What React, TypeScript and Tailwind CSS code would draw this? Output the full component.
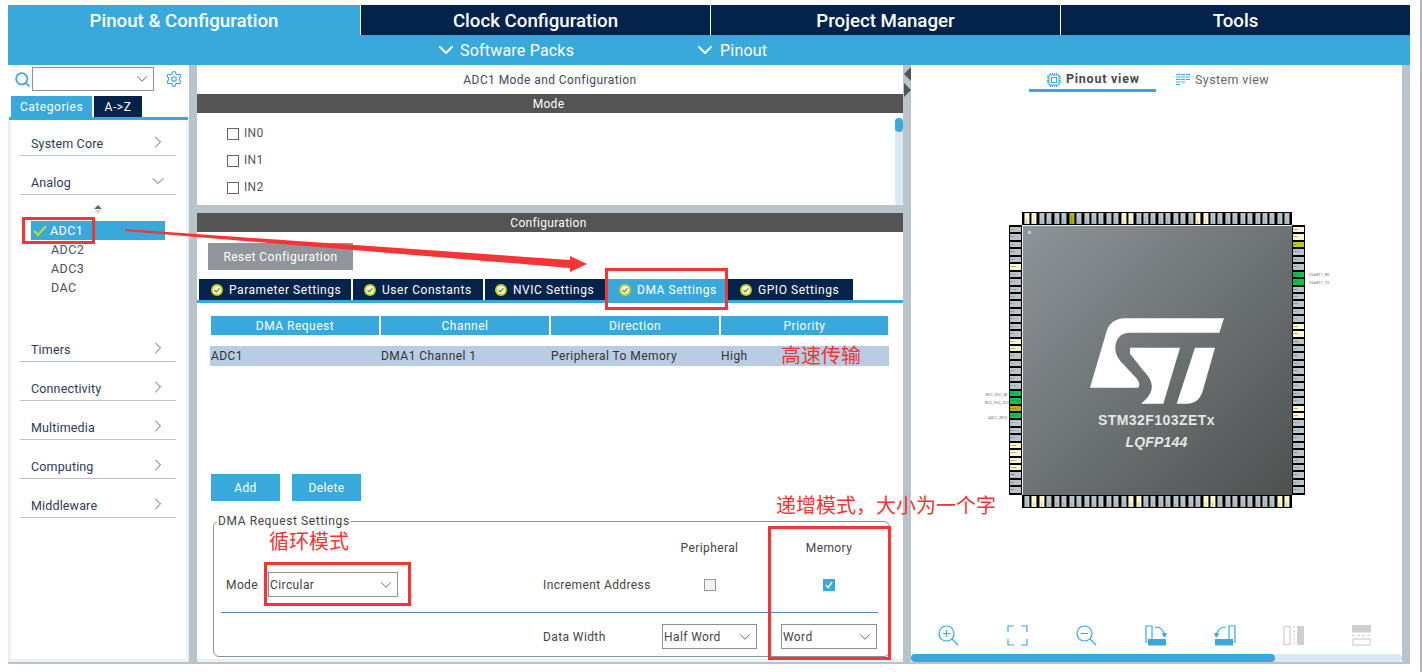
import React from "react";
import { ChevronDown, ChevronRight, Search, Settings } from "lucide-react";

const TOP = ["VDD","VSS","PE1","PE0","PB9","PB8","BOOT0","PB7","PB6","PB5","PB4","PB3","PG15","VDD","VSS","PG14","PG13","PG12","PG11","PG10","PG9","PD7","PD6","VDD","VSS","PD5","PD4","PD3","PD2","PD1","PD0","PC12","PC11","PC10","PA15","PA14"];
const RIGHT = ["VDD","VSS","NC","PA13","PA12","PA11","PA10","PA9","PA8","PC9","PC8","PC7","PC6","VDD","VSS","PG8","PG7","PG6","PG5","PG4","PG3","PG2","PD15","PD14","VDD","VSS","PD13","PD12","PD11","PD10","PD9","PD8","PB15","PB14","PB13","PB12"];
const LEFT = ["PE2","PE3","PE4","PE5","PE6","VBAT","PC13","PC14","PC15","PF0","PF1","PF2","PF3","PF4","PF5","VSS","VDD","PF6","PF7","PF8","PF9","PF10","OSC_IN","OSC_OUT","NRST","PC0","PC1","PC2","PC3","VSSA","VREF-","VREF+","VDDA","PA0","PA1","PA2"];
const BOTTOM = ["PA3","VSS","VDD","PA4","PA5","PA6","PA7","PC4","PC5","PB0","PB1","PB2","PF11","PF12","VSS","VDD","PF13","PF14","PF15","PG0","PG1","PE7","PE8","PE9","VSS","VDD","PE10","PE11","PE12","PE13","PE14","PE15","PB10","PB11","VSS","VDD"];

function pinColor(n: string): string {
  if (n.startsWith("VDD") || n.startsWith("VSS") || n === "VBAT" || n.startsWith("VREF")) return "bg-[#fff6cc]";
  if (n === "BOOT0") return "bg-[#b3b300]";
  if (n === "NRST") return "bg-[#b3b300]";
  if (n === "NC") return "bg-[#b9cc00]";
  if (n === "PA10" || n === "PA9" || n === "OSC_IN" || n === "OSC_OUT" || n === "PC0") return "bg-[#0cc44a]";
  return "bg-[#b9c4ca]";
}

function HPins({ names }: { names: string[] }) {
  return (
    <div className="flex flex-col bg-black py-px w-[13px] h-[270px]">
      {names.map((n, i) => (
        <div key={i} className={`flex-1 my-px mx-px overflow-hidden leading-[5px] text-[2.5px] text-[#555] ${pinColor(n)}`}>{n}</div>
      ))}
    </div>
  );
}
function VPins({ names }: { names: string[] }) {
  return (
    <div className="flex bg-black px-px h-[13px] ml-[13px] w-[270px]">
      {names.map((n, i) => (
        <div key={i} className={`flex-1 mx-px my-px overflow-hidden leading-[5px] text-[2.5px] text-[#555] [writing-mode:vertical-rl] rotate-180 ${pinColor(n)}`}>{n}</div>
      ))}
    </div>
  );
}

function Ok() {
  return (
    <svg width="12" height="12" viewBox="0 0 12 12" className="shrink-0">
      <circle cx="6" cy="6" r="5" fill="#f6f7d8" stroke="#c4cf1c" strokeWidth="2" />
      <path d="M3.6 6 L5.4 7.8 L8.4 4.4" fill="none" stroke="#6f7f2a" strokeWidth="1.2" />
    </svg>
  );
}

function Category({ label, open, h = "h-[39px]" }: { label: string; open?: boolean; h?: string }) {
  return (
    <div className={`ml-[9px] mr-[10px] ${h} border-b border-[#b9c4ca] flex items-end justify-between pb-[4px] pl-[11px] pr-[8px] text-[12.5px] text-[#2f3a55] tracking-[0.15px]`}>
      <span className="leading-[15px]">{label}</span>
      {open ? (
        <ChevronDown size={20} strokeWidth={1.1} className="text-[#555] -mb-[1px]" />
      ) : (
        <ChevronRight size={20} strokeWidth={1.1} className="text-[#555] -mb-[1px]" />
      )}
    </div>
  );
}

function Select({ value, w }: { value: string; w: string }) {
  return (
    <div className={`${w} h-[25px] border border-[#8c9196] flex items-center justify-between pl-px pr-[2px] text-[12px] tracking-[0.4px] text-[#444]`}>
      <span>{value}</span>
      <ChevronDown size={18} strokeWidth={1.2} className="text-[#555]" />
    </div>
  );
}

function SubTab({ label, active, w }: { label: string; active?: boolean; w: string }) {
  return (
    <div className={`${w} h-[21px] flex items-center gap-[6px] text-[12px] tracking-[0.55px] text-white ${active ? "bg-[#39a9dc]" : "bg-[#03234b]"}`}>
      <Ok />
      <span>{label}</span>
    </div>
  );
}

const blue = "#39a9dc";

function ToolIcons() {
  return (
    <div className="h-[21px] pl-[27px] grid grid-cols-[69px_69px_69px_69px_69px_69px_69px]">
      <svg width="21" height="21" viewBox="0 0 21 21" fill="none" stroke={blue} strokeWidth="1.2">
        <circle cx="8.5" cy="8.5" r="7.5" /><path d="M14 14 L20 20 M5 8.5 H12 M8.5 5 V12" />
      </svg>
      <svg width="21" height="21" viewBox="0 0 21 21" fill="none" stroke={blue} strokeWidth="1.2">
        <path d="M1 7 V1 H7 M14 1 H20 V7 M20 14 V20 H14 M7 20 H1 V14" />
      </svg>
      <svg width="21" height="21" viewBox="0 0 21 21" fill="none" stroke={blue} strokeWidth="1.2">
        <circle cx="8.5" cy="8.5" r="7.5" /><path d="M14 14 L20 20 M5 8.5 H12" />
      </svg>
      <svg width="22" height="21" viewBox="0 0 22 21" fill="none" stroke={blue} strokeWidth="1.2">
        <path d="M7 17 H1 V1 H7 V14" />
        <rect x="3" y="14" width="18" height="6.5" fill={blue} stroke="none" />
        <path d="M10 2 C15 2 19 5 20 11" />
        <path d="M16.5 8.5 L20 13 L22 8 Z" fill={blue} stroke="none" />
      </svg>
      <svg width="22" height="21" viewBox="0 0 22 21" fill="none" stroke={blue} strokeWidth="1.2">
        <path d="M15 17 H21 V1 H15 V14" />
        <rect x="1" y="14" width="18" height="6.5" fill={blue} stroke="none" />
        <path d="M12 2 C7 2 3 5 2 11" />
        <path d="M0 8 L2 13 L5.5 8.5 Z" fill={blue} stroke="none" />
      </svg>
      <svg width="22" height="21" viewBox="0 0 22 21" fill="none" stroke="#cfcfcf" strokeWidth="1.2">
        <rect x="1" y="1.5" width="6" height="18" />
        <path d="M11 1 V20" strokeDasharray="2 2" />
        <rect x="14" y="1" width="7" height="19" fill="#cfcfcf" stroke="none" />
      </svg>
      <svg width="19" height="21" viewBox="0 0 19 21" fill="none" stroke="#cfcfcf" strokeWidth="1.2">
        <rect x="0" y="0" width="19" height="7.5" fill="#cfcfcf" stroke="none" />
        <path d="M0 10.5 H19" strokeDasharray="3 2" />
        <rect x="1" y="14" width="17" height="6" />
      </svg>
    </div>
  );
}

export default function App() {
  return (
    <div className="relative w-[1422px] h-[672px] bg-white border-r-2 border-[#b4b4b4] overflow-hidden pt-[5px] pl-[8px] font-['Roboto','Liberation_Sans',sans-serif]">
      <div className="w-[1402px]">
        {/* Top tabs */}
        <div className="flex h-[30px] text-[18.7px] font-medium text-white">
          <div className="w-[352px] pt-[2px] bg-[#39a9dc] flex items-center justify-center">Pinout &amp; Configuration</div>
          {["Clock Configuration", "Project Manager", "Tools"].map((t) => (
            <div key={t} className="w-[350px] pt-[2px] ml-px flex-1 bg-[#03234b] flex items-center justify-center">{t}</div>
          ))}
        </div>
        {/* Sub bar */}
        <div className="h-[30px] bg-[#39a9dc] flex items-center pl-[426px] text-[16px] text-white tracking-[0.2px]">
          <ChevronDown size={24} strokeWidth={2} />
          <span className="ml-[2px] w-[233px] pt-[1px]">Software Packs</span>
          <ChevronDown size={24} strokeWidth={2} />
          <span className="ml-[3px] pt-[1px]">Pinout</span>
        </div>

        {/* Body */}
        <div className="flex h-[599px] bg-[#b9c4ca] pb-[2px] pr-[8px]">
          {/* Sidebar */}
          <div className="w-[181px] flex flex-col bg-white">
            <div className="h-[31px] flex items-center pl-[6px] pb-[3px]">
              <Search size={17} strokeWidth={2.4} className="text-[#39a9dc]" />
              <div className="ml-[1px] w-[122px] h-[24px] border border-[#8c9196] flex items-center justify-end pr-[2px]">
                <ChevronDown size={18} strokeWidth={1.2} className="text-[#555]" />
              </div>
              <Settings size={18} strokeWidth={1.6} className="text-[#39a9dc] ml-[11px]" />
            </div>
            <div className="flex h-[21px] pl-[3px] gap-[2px] text-[12px] tracking-[0.55px] text-white">
              <div className="w-[81px] bg-[#39a9dc] flex items-center justify-center">Categories</div>
              <div className="w-[48px] bg-[#03234b] flex items-center justify-center">A-&gt;Z</div>
            </div>
            <div className="h-[3px] bg-[#39a9dc] mx-px" />
            <div className="flex-1 border-x-[3px] border-b-[3px] border-[#edf0f2] flex flex-col">
              <Category label="System Core" h="h-[36px]" />
              <Category label="Analog" open />
              <div className="h-[128px] relative text-[12.5px] tracking-[0.45px] text-[#4a4f63]">
                <div className="absolute left-[83px] top-[10px] flex flex-col items-center gap-[1px]">
                  <div className="w-0 h-0 border-x-[4px] border-x-transparent border-b-[4px] border-b-[#666]" />
                  <div className="w-0 h-0 border-x-[4px] border-x-transparent border-t-[4px] border-t-[#d5d5d5]" />
                </div>
                <div className="pt-[26px] pl-[20px]">
                  <div className="w-[134px] h-[19px] bg-[#39a9dc] text-white flex items-center pl-[2px] gap-[3px]">
                    <svg width="14" height="12" viewBox="0 0 14 12" fill="none" stroke="#c4d62a" strokeWidth="2.2" className="shrink-0"><path d="M1 6 L5 10 L13 1" /></svg>
                    <span className="leading-[19px]">ADC1</span>
                  </div>
                  {["ADC2", "ADC3", "DAC"].map((t) => (
                    <div key={t} className="h-[19px] pl-[20px] leading-[19px]">{t}</div>
                  ))}
                </div>
              </div>
              {["Timers", "Connectivity", "Multimedia", "Computing", "Middleware"].map((t) => (
                <Category key={t} label={t} />
              ))}
            </div>
          </div>

          <div className="w-[8px]" />

          {/* Center */}
          <div className="w-[706px] flex flex-col">
            <div className="bg-white">
              <div className="h-[29px] flex items-center justify-center text-[12px] tracking-[0.42px] text-[#454a5e]">ADC1 Mode and Configuration</div>
              <div className="h-[19px] pr-[3px] bg-[#535453] text-white text-[12px] tracking-[0.3px] flex items-center justify-center">Mode</div>
              <div className="h-[92px] flex">
                <div className="flex-1 pl-[30px] pt-[11px] text-[12px] tracking-[0.3px] text-[#555]">
                  {["IN0", "IN1", "IN2"].map((t) => (
                    <div key={t} className="h-[27px] flex items-start gap-[5px] leading-[19px]">
                      <div className="w-[12px] h-[12px] border border-[#666] mt-[4px]" />
                      <span>{t}</span>
                    </div>
                  ))}
                </div>
                <div className="w-[8px] mt-[5px] bg-[#d9e8f5] rounded-[4px]">
                  <div className="h-[14px] bg-[#39a9dc] rounded-[4px]" />
                </div>
              </div>
            </div>
            <div className="h-[8px]" />
            <div className="flex-1 bg-white flex flex-col border-b-[3px] border-[#edf0f2]">
              <div className="h-[19px] pr-[3px] bg-[#535453] text-white text-[12px] tracking-[0.3px] flex items-center justify-center">Configuration</div>
              <div className="mt-[11px] ml-[11px] w-[145px] h-[27px] bg-[#8f959a] text-white text-[12px] tracking-[0.45px] flex items-center justify-center">Reset Configuration</div>
              <div className="mt-[9px] ml-[2px] flex gap-[2px]">
                <SubTab label="Parameter Settings" w="w-[152px] pl-[12px]" />
                <SubTab label="User Constants" w="w-[130px] pl-[11px]" />
                <SubTab label="NVIC Settings" w="w-[120px] -mr-[2px] pl-[10px]" />
                <SubTab label="DMA Settings" active w="w-[123px] -mr-[2px] pl-[14px]" />
                <SubTab label="GPIO Settings" w="w-[125px] pl-[12px]" />
              </div>
              <div className="h-[3px] bg-[#39a9dc]" />
              <div className="mt-[13px] ml-[14px] w-[677px] grid grid-cols-[168px_168px_168px_167px] gap-x-[2px] h-[19px] text-white text-[12px] tracking-[0.5px]">
                {["DMA Request", "Channel", "Direction", "Priority"].map((t) => (
                  <div key={t} className="bg-[#39a9dc] flex items-center justify-center">{t}</div>
                ))}
              </div>
              <div className="mt-[11px] ml-[13px] w-[679px] h-[20px] bg-[#b8cce4] grid grid-cols-[170px_170px_170px_119px] text-[12px] text-[#333] items-center pl-px tracking-[0.45px]">
                {["ADC1", "DMA1 Channel 1", "Peripheral To Memory", "High"].map((t) => (
                  <div key={t}>{t}</div>
                ))}
              </div>
              <div className="mt-[108px] ml-[14px] flex gap-[12px] text-white text-[12px] tracking-[0.4px]">
                <div className="w-[69px] h-[27px] bg-[#39a9dc] flex items-center justify-center">Add</div>
                <div className="w-[69px] h-[27px] bg-[#39a9dc] flex items-center justify-center">Delete</div>
              </div>
              <div className="relative mt-[20px] ml-[16px] w-[677px] h-[136px] border border-[#8c9196] rounded-[6px] text-[12px] tracking-[0.4px] text-[#444]">
                <div className="absolute -top-[8px] left-[3px] bg-white px-px leading-[15px] tracking-[0.6px]">DMA Request Settings</div>
                <div className="absolute left-[556px] top-[18px] bottom-0 border-l border-[#5b7fbf]" />
                <div className="mt-[17px] h-[18px] flex items-center pl-[448px] leading-[18px]">
                  <div className="w-[95px] text-center">Peripheral</div>
                  <div className="w-[96px] ml-[24px] text-center">Memory</div>
                </div>
                <div className="mt-[15px] h-[25px] flex items-center pl-[12px]">
                  <span className="w-[42px]">Mode</span>
                  <Select value="Circular" w="w-[130px]" />
                  <span className="ml-[145px] w-[119px]">Increment Address</span>
                  <div className="w-[95px] flex justify-center">
                    <div className="w-[12px] h-[12px] border border-[#9a9a9a] bg-[#f2f2f2]" />
                  </div>
                  <div className="w-[96px] ml-[24px] flex justify-center">
                    <div className="w-[12px] h-[12px] bg-[#39a9dc] flex items-center justify-center">
                      <svg width="10" height="10" viewBox="0 0 10 10" fill="none" stroke="white" strokeWidth="1.4"><path d="M2 5 L4.2 7.6 L8 2" /></svg>
                    </div>
                  </div>
                </div>
                <div className="mt-[15px] mx-[7px] border-t border-[#5b7fbf] w-[657px]" />
                <div className="mt-[11px] h-[25px] flex items-center pl-[329px]">
                  <span className="w-[119px]">Data Width</span>
                  <Select value="Half Word" w="w-[95px]" />
                  <div className="w-[24px]" />
                  <Select value="Word" w="w-[96px]" />
                </div>
              </div>
            </div>
          </div>

          {/* Splitter arrows */}
          <div className="w-[8px] flex flex-col items-center pt-[2px] gap-[2px]">
            <div className="w-0 h-0 border-y-[7px] border-y-transparent border-r-[7px] border-r-[#535453]" />
            <div className="w-0 h-0 border-y-[7px] border-y-transparent border-l-[7px] border-l-[#535453]" />
          </div>

          {/* Right */}
          <div className="w-[491px] bg-white flex flex-col">
            <div className="h-[27px] flex pl-[118px] text-[12.5px]">
              <div className="w-[127px] border-b-[3px] border-[#39a9dc] flex items-center pl-[18px] pt-[5px] gap-[5px] font-bold text-[#4a4a4a] tracking-[0.75px]">
                <svg width="14" height="14" viewBox="0 0 14 14" fill="none" stroke={blue} strokeWidth="1" className="shrink-0">
                  <rect x="2" y="2" width="10" height="10" />
                  <rect x="4.5" y="4.5" width="5" height="5" />
                  <path d="M0 3.5H2M0 5.5H2M0 7.5H2M0 9.5H2M12 3.5H14M12 5.5H14M12 7.5H14M12 9.5H14M3.5 0V2M5.5 0V2M7.5 0V2M9.5 0V2M3.5 12V14M5.5 12V14M7.5 12V14M9.5 12V14" />
                </svg>
                <span>Pinout view</span>
              </div>
              <div className="flex items-center pl-[20px] gap-[5px] pt-[3px] text-[#666] tracking-[0.4px]">
                <svg width="14" height="14" viewBox="0 0 14 14" fill="none" stroke={blue} strokeWidth="1.2" className="shrink-0">
                  <path d="M0 1.5H4M5 1.5H9M10 1.5H14M0 4H4M5 4H9M10 4H14M0 6.5H4M5 6.5H9M10 6.5H14M0 9H4M5 9H9M0 11.5H4" />
                </svg>
                <span>System view</span>
              </div>
            </div>

            {/* Chip */}
            <div className="relative w-[296px] ml-[98px] mt-[120px]">
              <VPins names={TOP} />
              <div className="flex">
                <HPins names={LEFT} />
                <div className="relative w-[270px] h-[270px] border-l border-t border-[#eee] bg-gradient-to-br from-[#8e959a] to-[#4e5150] flex flex-col items-center text-[#e6e6e6]">
                  <div className="absolute left-[5px] top-[5px] w-[3px] h-[3px] bg-[#c4c8cc]" />
                  <svg width="155" height="100" viewBox="0 0 465 300" className="mt-[85px] -ml-[1px] shrink-0">
                    <path fill="#fff" d="M30 230 L80 60 C88 36 108 22 135 22 L432 22 L418 65 L150 65 C120 65 106 85 106 112 C106 135 120 150 135 165 L165 197 C178 210 182 222 174 230 Z" />
                    <path fill="#fff" d="M150 110 L300 110 L250 278 L183 278 C205 262 218 240 215 222 C212 200 200 190 188 176 L150 128 Z" />
                    <path fill="#fff" d="M345 110 L405 110 L368 240 C360 265 345 278 322 278 L290 278 Z" />
                  </svg>
                  <div className="-ml-[2px] font-['Liberation_Sans',sans-serif] font-bold text-[14px] tracking-[0.45px] leading-[18px]">STM32F103ZETx</div>
                  <div className="mt-[4px] -ml-[2px] font-['Liberation_Sans',sans-serif] font-bold italic text-[14px] tracking-[0.2px] leading-[18px]">LQFP144</div>
                </div>
                <HPins names={RIGHT} />
              </div>
              <VPins names={BOTTOM} />
              <div className="absolute left-[300px] top-[59px] text-[3.5px] text-[#666] leading-[8px] tracking-[0.2px]">USART1_RX<br />USART1_TX</div>
              <div className="absolute left-[-24px] top-[180px] w-[22px] text-right text-[3.5px] text-[#666] leading-[7.5px] tracking-[0.1px]">RCC_OSC_IN<br />RCC_OSC_OUT<br /><br />ADC1_IN10</div>
            </div>

            <div className="mt-auto">
              <ToolIcons />
              <div className="mt-[8px] h-[8px] bg-[#d9e8f5] rounded-[4px]">
                <div className="w-[364px] h-[8px] bg-[#39a9dc] rounded-[4px]" />
              </div>
            </div>
          </div>
        </div>
      </div>

      {/* Red annotations laid over the screenshot */}
      <div className="absolute left-[22px] top-[217px] w-[73px] h-[27px] border-[3px] border-[#f33535]" />
      <div className="absolute left-[605px] top-[268px] w-[123px] h-[42px] border-[3px] border-[#f33535]" />
      <div className="absolute left-[264px] top-[562px] w-[147px] h-[44px] border-[3px] border-[#f33535]" />
      <div className="absolute left-[768px] top-[526px] w-[123px] h-[134px] border-[3px] border-[#f33535]" />
      <svg className="absolute left-0 top-0 pointer-events-none" width="1422" height="672">
        <polygon fill="#f33535" points="125,229 570,260 570,256 587,264 570,272 570,268 125,231" />
      </svg>
      <div className="absolute left-[781px] top-[341px] text-[20px] leading-[28px] text-[#f33535] font-['Noto_Sans_CJK_SC',sans-serif]">高速传输</div>
      <div className="absolute left-[269px] top-[527px] text-[20px] leading-[28px] text-[#f33535] font-['Noto_Sans_CJK_SC',sans-serif]">循环模式</div>
      <div className="absolute left-[776px] top-[491px] text-[20px] leading-[28px] text-[#f33535] font-['Noto_Sans_CJK_SC',sans-serif]">递增模式，大小为一个字</div>
    </div>
  );
}
